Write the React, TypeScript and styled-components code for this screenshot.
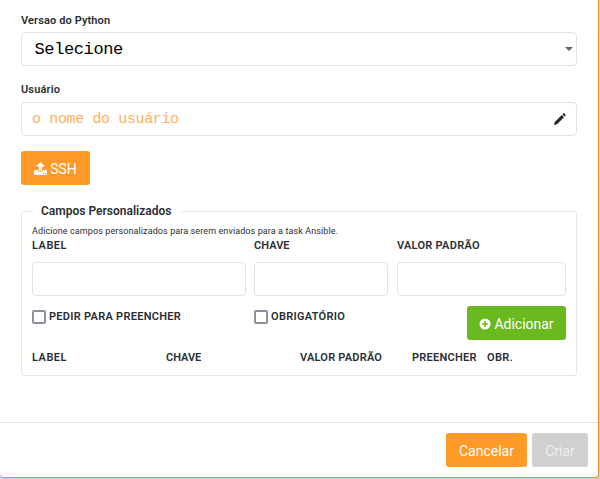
import React from "react";
import styled, { createGlobalStyle } from "styled-components";

const GlobalStyle = createGlobalStyle`
  * { box-sizing: border-box; }
  body { margin: 0; background: #d6d6d8; overflow: hidden; font-family: Roboto, "Noto Sans", sans-serif; color: #292e34; }
`;

const Page = styled.div`
  height: 479px;
  background: linear-gradient(#dedede, #d0d0d0);
`;

const Dialog = styled.main`
  display: flex;
  flex-direction: column;
  width: 599px;
  height: 478px;
  background: #fff;
  border: 1px solid #ee922c;
  border-top: 0;
  border-left: 0;
  border-radius: 0 0 4px 4px;
`;

const Body = styled.div`
  flex: 1;
  padding: 14px 21px 0;
`;

const Text = styled.span<{ $spacing?: number }>`
  display: block;
  height: 14px;
  font-size: 11px;
  line-height: 14px;
  font-weight: 600;
  white-space: nowrap;
  letter-spacing: ${(p) => p.$spacing ?? 0}px;
`;

const Control = styled.div<{ $gap: number }>`
  display: flex;
  align-items: center;
  justify-content: space-between;
  height: 34px;
  margin-top: ${(p) => p.$gap}px;
  border: 1px solid #e2e2e2;
  border-radius: 4px;
  background: #fff;
`;

const Value = styled.span`
  padding: 1px 0 0 12.5px;
  font: 17px/20px "Liberation Mono", monospace;
  letter-spacing: -0.38px;
  color: #000;
`;

const Placeholder = styled.span`
  padding: 2px 0 0 10px;
  font: 15px/20px "Liberation Mono", monospace;
  letter-spacing: -0.37px;
  color: #ffb05a;
`;

const Caret = styled.svg`
  margin-right: 3px;
`;

const Pencil = styled.svg`
  margin-right: 10px;
`;

const UserField = styled.div`
  margin-top: 17px;
`;

const Button = styled.button<{ $color: string; $width: number; $ink?: string }>`
  display: flex;
  align-items: center;
  justify-content: center;
  gap: 3px;
  width: ${(p) => p.$width}px;
  height: 34px;
  padding: 1px 0 0;
  border: 0;
  border-radius: 3px;
  background: ${(p) => p.$color};
  color: ${(p) => p.$ink ?? "#fff"};
  font: 400 14px/18px Roboto, sans-serif;
  white-space: nowrap;
`;

const Upload = styled.div`
  margin: 15px 0 19px;
`;

const Group = styled.fieldset`
  height: 172px;
  margin: 0;
  padding: 6px 10px 0;
  min-width: 0;
  border: 1px solid #e6e6e6;
  border-radius: 3px;
`;

const Legend = styled.legend`
  height: 14px;
  width: 149px;
  padding: 0 9px;
  font-size: 12px;
  line-height: 14px;
  font-weight: 600;
  white-space: nowrap;
`;

const Hint = styled.p`
  height: 14px;
  margin: 0 0 1px;
  font-size: 9px;
  line-height: 14px;
  white-space: nowrap;
  letter-spacing: 0.1px;
`;

const Grid = styled.div`
  display: grid;
  grid-template-columns: 222px 143px 169px;
`;

const FieldColumn = styled.div<{ $width: number }>`
  width: ${(p) => p.$width}px;
`;

const Options = styled(Grid)`
  margin-top: 10px;
  height: 34px;
`;

const Check = styled.label`
  display: flex;
  align-items: center;
  gap: 3px;
  height: 14px;
  margin-top: 4px;
`;

const Box = styled.span`
  width: 14px;
  height: 14px;
  border: 2px solid #8f8f9d;
  border-radius: 2px;
`;

const CheckText = styled(Text)`
  margin-top: -1px;
`;

const AddSlot = styled.div`
  display: flex;
  justify-content: flex-end;
`;

const Headings = styled.div`
  display: grid;
  grid-template-columns: 134px 134px 112px 75px auto;
  margin-top: 11px;
`;

const Footer = styled.footer`
  display: flex;
  justify-content: flex-end;
  gap: 5px;
  height: 55px;
  padding: 10px 10px 0 0;
  border-top: 1px solid #e2e2e2;
`;

const UploadIcon = () => (
  <svg width="13" height="13" viewBox="0 0 13 13" fill="currentColor">
    <path d="M6.500 0L11 4.600H8.200V8.500H4.800V4.600H2z" />
    <path fillRule="evenodd" d="M.6 8h3.400c0 1 .4 1.400 1.100 1.400h2.800C8.600 9.400 9 9 9 8h3.400c.4 0 .6.300.6.700v3.600c0 .4-.3.700-.7.700H.7c-.4 0-.7-.3-.7-.7V8.700C0 8.300.2 8 .6 8zm8.400 3v1h1v-1zm2 0v1h1v-1z" />
  </svg>
);

const PlusIcon = () => (
  <svg width="12" height="12" viewBox="0 0 12 12">
    <circle cx="6" cy="6" r="5.500" fill="#fff" />
    <path d="M6 3v6M3 6h6" stroke="#6ab91f" strokeWidth="1.700" />
  </svg>
);

export default function App() {
  return (
    <Page>
      <GlobalStyle />
      <Dialog>
        <Body>
          <Text $spacing={0.12}>Versao do Python</Text>
          <Control $gap={4}>
            <Value>Selecione</Value>
            <Caret width="8" height="4" viewBox="0 0 8 4"><path d="M0 0h8L4 4z" fill="#666" /></Caret>
          </Control>
          <UserField>
            <Text $spacing={0.15}>Usuário</Text>
            <Control $gap={5}>
              <Placeholder>o nome do usuário</Placeholder>
              <Pencil width="12" height="12" viewBox="0 0 12 12" fill="#252830">
                <path d="M0 12l.8-3L7.800 2l2.200 2.200-7 7zM8.500 1.400l.9-.9c.4-.4.800-.4 1.200 0l.9.9c.4.4.4.800 0 1.200l-.9.9z" />
              </Pencil>
            </Control>
          </UserField>
          <Upload>
            <Button $color="#fe9a27" $width={69}><UploadIcon />SSH</Button>
          </Upload>
          <Group>
            <Legend>Campos Personalizados</Legend>
            <Hint>Adicione campos personalizados para serem enviados para a task Ansible.</Hint>
            <Grid>
              <FieldColumn $width={214}><Text $spacing={0.5}>LABEL</Text><Control $gap={9} /></FieldColumn>
              <FieldColumn $width={134}><Text $spacing={0.05}>CHAVE</Text><Control $gap={9} /></FieldColumn>
              <FieldColumn $width={169}><Text $spacing={0.27}>VALOR PADRÃO</Text><Control $gap={9} /></FieldColumn>
            </Grid>
            <Options>
              <Check><Box /><CheckText $spacing={0.29}>PEDIR PARA PREENCHER</CheckText></Check>
              <Check><Box /><CheckText $spacing={0.3}>OBRIGATÓRIO</CheckText></Check>
              <AddSlot><Button $color="#6ab91f" $width={99}><PlusIcon />Adicionar</Button></AddSlot>
            </Options>
            <Headings>
              <Text $spacing={0.5}>LABEL</Text><Text>CHAVE</Text><Text $spacing={0.22}>VALOR PADRÃO</Text><Text $spacing={0.25}>PREENCHER</Text><Text $spacing={0.35}>OBR.</Text>
            </Headings>
          </Group>
        </Body>
        <Footer>
          <Button $color="#fe9a27" $width={81}>Cancelar</Button>
          <Button $color="#d0d0d0" $ink="#eeeeee" $width={56} disabled>Criar</Button>
        </Footer>
      </Dialog>
    </Page>
  );
}
